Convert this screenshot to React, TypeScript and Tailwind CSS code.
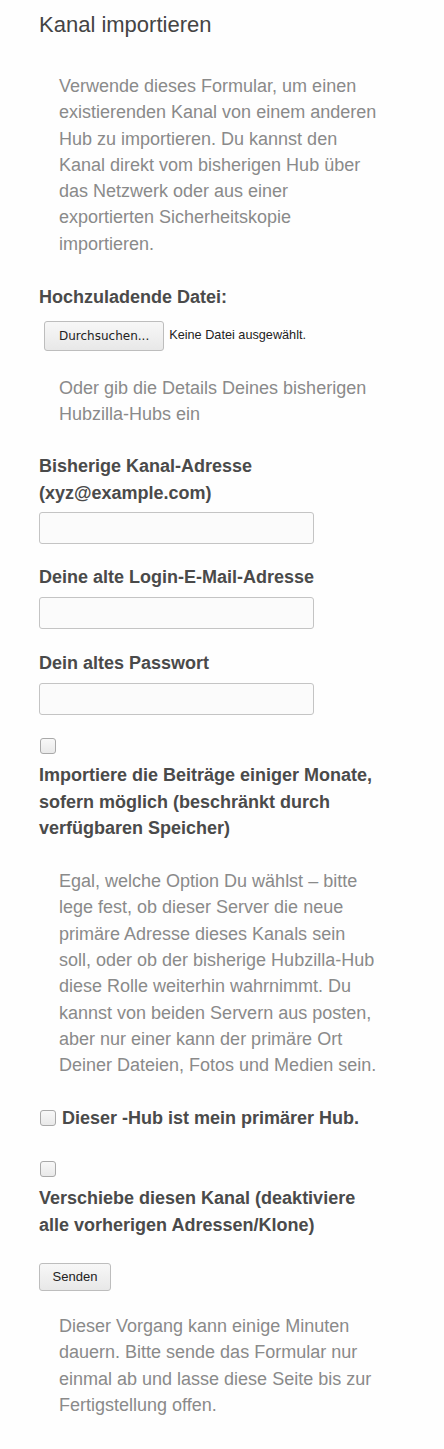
import React from 'react';

const font = { fontFamily: '"Liberation Sans", Arial, sans-serif' };

function Para({ children, className = '' }: { children: React.ReactNode; className?: string }) {
  return <p className={`pl-5 pr-[24px] text-[18px] leading-[26.3px] text-[#8a8a8a] ${className}`}>{children}</p>;
}

function Label({ children, className = '' }: { children: React.ReactNode; className?: string }) {
  return <label className={`block text-[18px] font-bold leading-[26.5px] text-[#4a4a4a] ${className}`}>{children}</label>;
}

function Box({ className = '' }: { className?: string }) {
  return (
    <input
      type="checkbox"
      className={`block h-4 w-4 appearance-none rounded-[3px] border border-[#a9a9a9] bg-gradient-to-b from-[#f8f8f8] to-[#e9e9e9] ${className}`}
    />
  );
}

function Field({ type = 'text', className = '' }: { type?: string; className?: string }) {
  return (
    <input
      type={type}
      className={`block h-8 w-[275px] rounded-[3px] border border-[#c4c4c4] bg-[#fbfbfb] px-2 text-sm outline-none ${className}`}
    />
  );
}

export default function App() {
  return (
    <div className="min-h-[1449px] w-[444px] bg-[#fefefe] pl-[39px] pr-[40px]" style={font}>
      <h1 className="pt-[11px] text-[22px] leading-[28px] text-[#444]">Kanal importieren</h1>

      <Para className="mt-[34px]">
        Verwende dieses Formular, um einen existierenden Kanal von einem anderen Hub zu importieren. Du kannst den
        Kanal direkt vom bisherigen Hub über das Netzwerk oder aus einer exportierten Sicherheitskopie importieren.
      </Para>

      <Label className="mt-[27px]">Hochzuladende Datei:</Label>
      <div className="mt-[10px] flex items-center pl-[5px]">
        <button
          className="h-[30px] rounded-[3px] border border-[#bdbdbd] bg-gradient-to-b from-[#f7f7f7] to-[#e8e8e8] px-[14px] text-[12px] text-[#222]"
          style={{ fontFamily: '"DejaVu Sans", sans-serif' }}
        >
          Durchsuchen...
        </button>
        <span className="ml-[5px] text-[12.7px] text-[#222]">Keine Datei ausgewählt.</span>
      </div>

      <Para className="mt-[24px]">Oder gib die Details Deines bisherigen Hubzilla-Hubs ein</Para>

      <Label className="mt-[26px] pr-4">Bisherige Kanal-Adresse (xyz@example.com)</Label>
      <Field className="mt-[6px]" />

      <Label className="mt-[20px]">Deine alte Login-E-Mail-Adresse</Label>
      <Field className="mt-[6.5px]" />

      <Label className="mt-[21px]">Dein altes Passwort</Label>
      <Field type="password" className="mt-[6.5px]" />

      <Box className="mt-[23px] ml-px" />
      <Label className="mt-[8px]">
        Importiere die Beiträge einiger Monate, sofern möglich (beschränkt durch verfügbaren Speicher)
      </Label>

      <Para className="mt-[26.5px]">
        Egal, welche Option Du wählst – bitte lege fest, ob dieser Server die neue primäre Adresse dieses Kanals sein
        soll, oder ob der bisherige Hubzilla-Hub diese Rolle weiterhin wahrnimmt. Du kannst von beiden Servern aus
        posten, aber nur einer kann der primäre Ort Deiner Dateien, Fotos und Medien sein.
      </Para>

      <div className="mt-[26px] flex items-center gap-[6px]">
        <Box className="ml-px" />
        <Label>Dieser -Hub ist mein primärer Hub.</Label>
      </div>

      <Box className="mt-[30px] ml-px" />
      <Label className="mt-[8px] pr-4">Verschiebe diesen Kanal (deaktiviere alle vorherigen Adressen/Klone)</Label>

      <button className="mt-[25px] h-[28px] w-[72px] rounded-[3px] border border-[#bdbdbd] bg-gradient-to-b from-[#f7f7f7] to-[#e8e8e8] text-[13px] text-[#222]">
        Senden
      </button>

      <Para className="mt-[22px]">
        Dieser Vorgang kann einige Minuten dauern. Bitte sende das Formular nur einmal ab und lasse diese Seite bis zur
        Fertigstellung offen.
      </Para>
    </div>
  );
}
